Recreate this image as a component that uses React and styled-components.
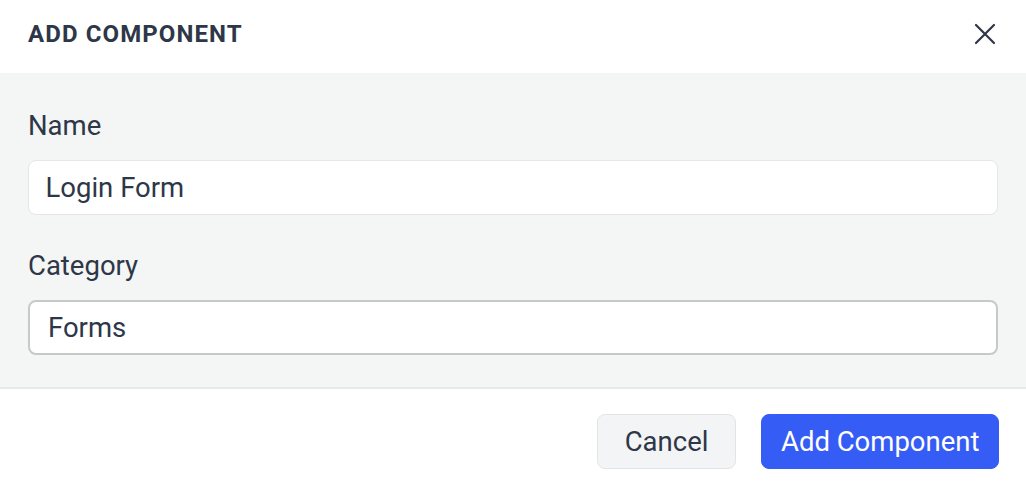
import React, { useState } from 'react';
import styled, { createGlobalStyle } from 'styled-components';

const GlobalStyle = createGlobalStyle`
  html, body {
    margin: 0;
    padding: 0;
    background: #ffffff;
    font-family: 'Roboto', 'Liberation Sans', sans-serif;
    color: #2d3748;
  }
  * {
    box-sizing: border-box;
  }
`;

const Dialog = styled.div`
  width: 1026px;
  height: 491px;
  display: flex;
  flex-direction: column;
  background: #ffffff;
  overflow: hidden;
`;

const Header = styled.header`
  height: 73px;
  display: flex;
  align-items: flex-start;
  justify-content: space-between;
  padding: 19px 28px 0 28px;
`;

const Title = styled.h2`
  margin: 0;
  font-size: 24px;
  line-height: 30px;
  font-weight: 700;
  letter-spacing: 1.1px;
  text-transform: uppercase;
  color: #2d3748;
`;

const CloseButton = styled.button`
  width: 24px;
  height: 24px;
  margin-top: 3px;
  margin-right: 1px;
  padding: 0;
  border: none;
  background: transparent;
  display: flex;
  align-items: center;
  justify-content: center;
  cursor: pointer;
  color: #2d3748;
`;

const Body = styled.div`
  background: #f4f5f5;
  border-bottom: 2px solid #e6e7e9;
  padding: 33px 28px 32px 28px;
  display: flex;
  flex-direction: column;
  gap: 31px;
`;

const Field = styled.label`
  display: flex;
  flex-direction: column;
  gap: 14px;
`;

const LabelText = styled.span`
  font-size: 27.5px;
  line-height: 40px;
  color: #2d3748;
`;

const Input = styled.input`
  width: 100%;
  height: 55px;
  border-radius: 8px;
  border: ${p => (p.$focused ? '2px solid #c6c8cb' : '1.5px solid #e4e6e8')};
  background: #ffffff;
  padding: 0 ${p => (p.$focused ? '18px' : '16.5px')};
  font-family: 'Roboto', 'Liberation Sans', sans-serif;
  font-size: 27.5px;
  color: #2d3748;
  outline: none;
`;

const Footer = styled.footer`
  display: flex;
  justify-content: flex-end;
  gap: 25px;
  padding: 25px 27px 0 28px;
`;

const Button = styled.button`
  height: 55px;
  padding: 0 ${p => (p.$primary ? '18.5px' : '27px')};
  border-radius: 8px;
  font-family: 'Roboto', 'Liberation Sans', sans-serif;
  font-size: 27.5px;
  cursor: pointer;
  border: 1.5px solid ${p => (p.$primary ? '#355cf5' : '#e2e4e6')};
  background: ${p => (p.$primary ? '#355cf5' : '#f3f4f5')};
  color: ${p => (p.$primary ? '#ffffff' : '#2d3748')};
`;

const CloseIcon = () => (
  <svg width="22" height="22" viewBox="0 0 22 22" fill="none">
    <path d="M2 2L20 20M20 2L2 20" stroke="currentColor" strokeWidth="2.2" strokeLinecap="round" />
  </svg>
);

const AddComponentDialog = () => {
  const [name, setName] = useState('Login Form');
  const [category, setCategory] = useState('Forms');

  return (
    <>
      <GlobalStyle />
      <Dialog>
        <Header>
          <Title>Add Component</Title>
          <CloseButton aria-label="Close">
            <CloseIcon />
          </CloseButton>
        </Header>
        <Body>
          <Field>
            <LabelText>Name</LabelText>
            <Input value={name} onChange={e => setName(e.target.value)} />
          </Field>
          <Field>
            <LabelText>Category</LabelText>
            <Input $focused value={category} onChange={e => setCategory(e.target.value)} />
          </Field>
        </Body>
        <Footer>
          <Button>Cancel</Button>
          <Button $primary>Add Component</Button>
        </Footer>
      </Dialog>
    </>
  );
};

export default AddComponentDialog;
